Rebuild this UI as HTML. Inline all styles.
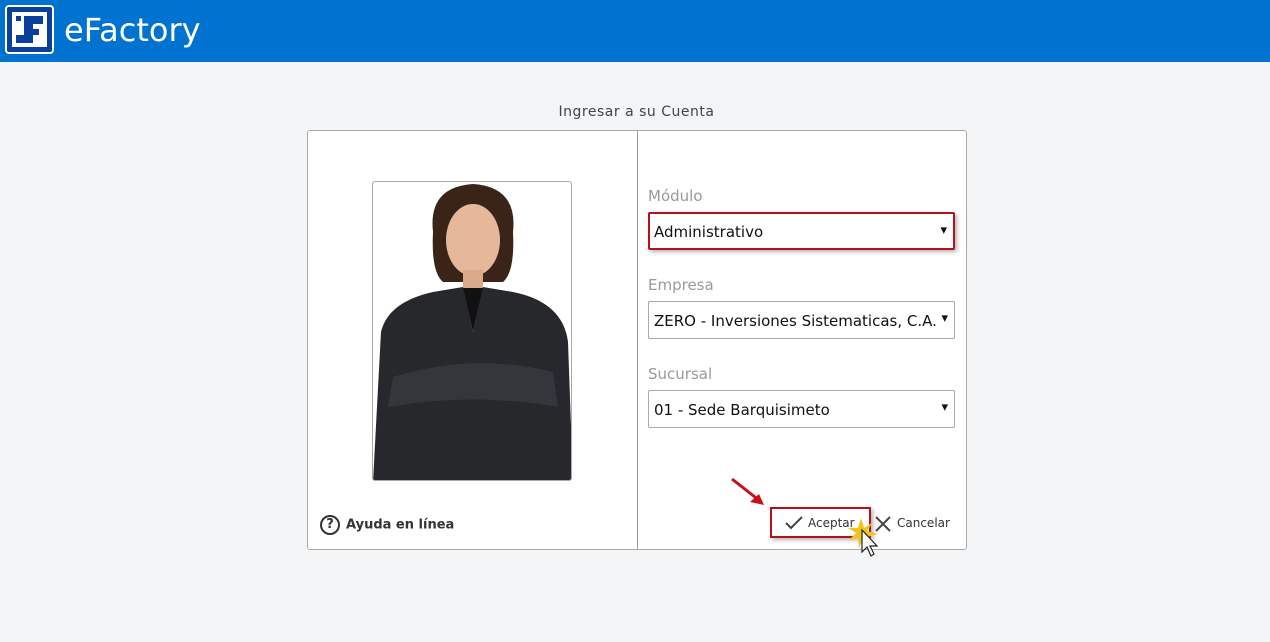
<!DOCTYPE html>
<html><head><meta charset="utf-8"><style>
*{box-sizing:border-box;margin:0;padding:0}
body{width:1270px;height:642px;background:#f4f5f7;font-family:"DejaVu Sans","Liberation Sans",sans-serif;position:relative;overflow:hidden}
.hdr{position:absolute;left:0;top:0;width:1270px;height:62px;background:#0072d0}
.logo{position:absolute;left:5px;top:5px;width:49px;height:49px;border:2px solid #fff;border-radius:4px;background:#0b3f9c}
.logo .in{position:absolute;left:5px;top:5px;width:35px;height:35px;background:#fff}
.title{position:absolute;left:64px;top:11px;color:#fff;font-size:32px;font-family:"DejaVu Sans",sans-serif}
.cap{position:absolute;left:0;width:1273px;top:104px;text-align:center;font-size:14px;color:#444;letter-spacing:.5px}
.box{position:absolute;left:307px;top:130px;width:660px;height:420px;background:#fff;border:1px solid #aaa;border-radius:3px}
.div{position:absolute;left:329px;top:0;width:1px;height:418px;background:#999}
.photo{position:absolute;left:64px;top:50px;width:200px;height:300px;border:1px solid #aaa;border-radius:3px;background:#fff;overflow:hidden}
.lbl{position:absolute;left:340px;font-size:15px;color:#999}
.sel{position:absolute;left:340px;width:307px;height:38px;border:1px solid #aaa;border-radius:2px;font-size:15px;color:#111;padding:10px 5px}
.sel:after{content:"▾";position:absolute;right:6px;top:9px;font-size:13px}
.help{position:absolute;left:12px;top:384px;font-size:13px;font-weight:bold;color:#333}
</style></head><body>
<div class="hdr"><div class="logo"><div class="in"><svg width="35" height="35" viewBox="0 0 35 35"><path d="M12 4h19v8H21v5h6v6H21v8H4v-8h8z" fill="#0b3f9c"/><rect x="4" y="4" width="5" height="5" fill="#0b3f9c"/></svg></div></div><div class="title">eFactory</div></div>
<div class="cap">Ingresar a su Cuenta</div>
<div class="box">
 <div class="photo"><svg width="200" height="300" viewBox="0 0 200 300">
  <path d="M60 50 Q55 5 100 2 Q145 5 140 50 Q142 90 130 100 L70 100 Q58 90 60 50Z" fill="#3a2418"/>
  <ellipse cx="100" cy="58" rx="27" ry="36" fill="#e6b89a"/>
  <rect x="90" y="88" width="20" height="25" fill="#d9a98a"/>
  <path d="M0 300 L8 150 Q15 120 60 110 L90 105 L100 150 L110 105 L140 110 Q190 120 195 160 L200 300Z" fill="#26282b"/>
  <path d="M20 195 Q100 170 180 190 L185 225 Q100 210 15 225Z" fill="#33363a"/>
  <path d="M90 106 L100 150 L110 106Z" fill="#111"/>
 </svg></div>
 <div class="help"><span style="display:inline-block;width:20px;height:20px;border:2px solid #333;border-radius:50%;text-align:center;line-height:16px;margin-right:6px;vertical-align:middle">?</span>Ayuda en línea</div>
 <div class="div"></div>
 <div class="lbl" style="top:56px">Módulo</div>
 <div class="sel" style="top:81px;border:2px solid #b0131a;box-shadow:2px 2px 4px rgba(0,0,0,.3);padding:9px 4px">Administrativo</div>
 <div class="lbl" style="top:145px">Empresa</div>
 <div class="sel" style="top:170px">ZERO - Inversiones Sistematicas, C.A.</div>
 <div class="lbl" style="top:234px">Sucursal</div>
 <div class="sel" style="top:259px">01 - Sede Barquisimeto</div>
 <svg style="position:absolute;left:420px;top:345px" width="45" height="35"><line x1="4" y1="3" x2="32" y2="25" stroke="#c8101a" stroke-width="3"/><path d="M36 29 L22 26 L31 18Z" fill="#c8101a"/></svg>
 <div style="position:absolute;left:462px;top:376px;width:101px;height:31px;border:2px solid #b0131a;box-shadow:2px 2px 4px rgba(0,0,0,.3)"></div>
 <svg style="position:absolute;left:476px;top:384px" width="20" height="16"><path d="M2 8 L7 13 L18 2" stroke="#444" stroke-width="2" fill="none"/></svg>
 <div style="position:absolute;left:500px;top:385px;font-size:12px;color:#333">Aceptar</div>
 <svg style="position:absolute;left:566px;top:384px" width="18" height="18"><path d="M2 2L16 16M16 2L2 16" stroke="#444" stroke-width="2"/></svg>
 <div style="position:absolute;left:589px;top:385px;font-size:12px;color:#333">Cancelar</div>
 <svg style="position:absolute;left:540px;top:385px" width="40" height="45"><path d="M13 2 L16 12 L25 6 L19 15 L30 18 L19 21 L24 30 L15 23 L11 32 L10 22 L1 24 L8 17 L0 12 L10 12Z" fill="#f3c21b"/><path d="M14 14 L14 36 L19 31 L23 40 L26 38 L22 30 L29 30Z" fill="#fff" stroke="#222" stroke-width="1.2"/></svg>
</div>
</body></html>
